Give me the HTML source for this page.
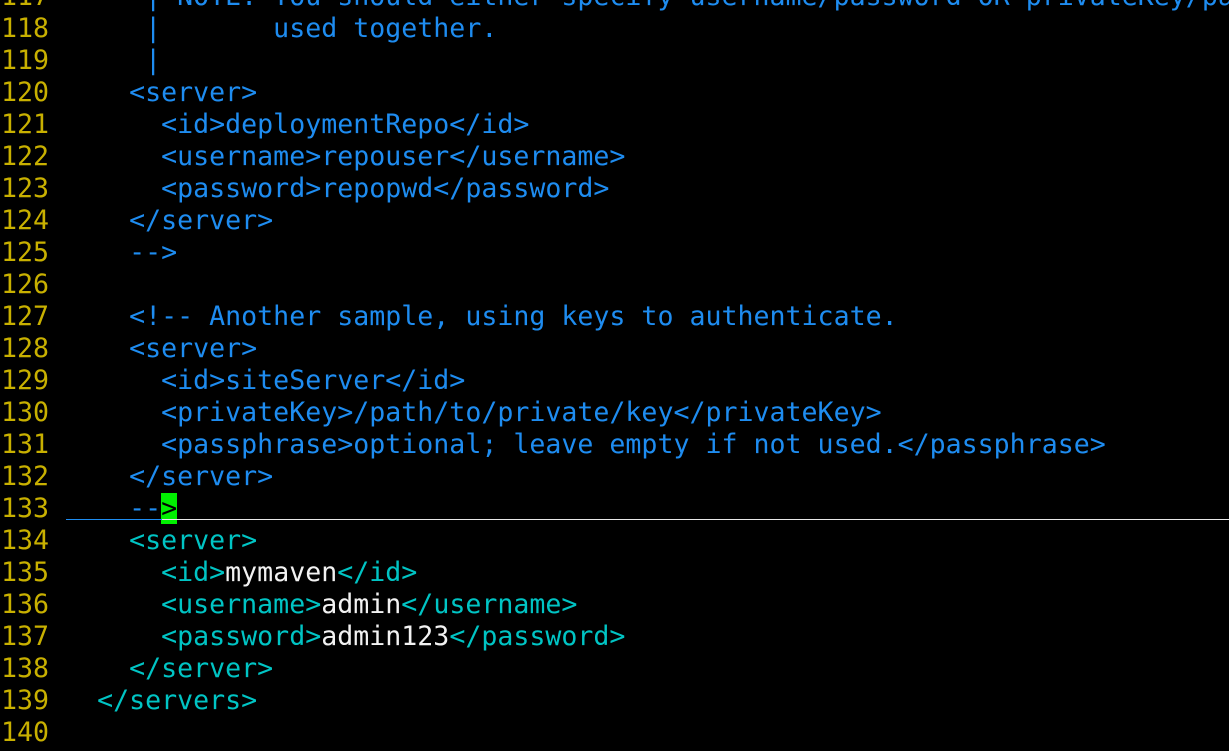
<!DOCTYPE html>
<html><head><meta charset="utf-8"><style>
html,body{margin:0;padding:0;background:#000;width:1229px;height:751px;overflow:hidden;position:relative}
.l{position:absolute;left:1px;width:1228px;overflow:hidden;height:32px;line-height:32px;white-space:pre;font-family:"DejaVu Sans Mono","Liberation Mono",monospace;font-size:26.6px;color:#1e8cf0;margin-top:1px}
.n{color:#c8b000}
.b{color:#1e8cf0}
.c{color:#00c4c4}
.w{color:#f2f2f2}
.cur{background:#00f000;color:#000}
#ul1{position:absolute;left:66px;top:519px;width:96px;height:1px;background:#1e8cf0}
#ul2{position:absolute;left:162px;top:519px;width:1067px;height:1px;background:#e8e8e8}
</style></head><body>
<div class="l" style="top:-20px"><span class="n">117 </span><span class="b">     | NOTE: You should either specify username/password OR privateKey/passphrase, since these pairs are</span></div>
<div class="l" style="top:12px"><span class="n">118 </span><span class="b">     |       used together.</span></div>
<div class="l" style="top:44px"><span class="n">119 </span><span class="b">     |</span></div>
<div class="l" style="top:76px"><span class="n">120 </span><span class="b">    &lt;server&gt;</span></div>
<div class="l" style="top:108px"><span class="n">121 </span><span class="b">      &lt;id&gt;deploymentRepo&lt;/id&gt;</span></div>
<div class="l" style="top:140px"><span class="n">122 </span><span class="b">      &lt;username&gt;repouser&lt;/username&gt;</span></div>
<div class="l" style="top:172px"><span class="n">123 </span><span class="b">      &lt;password&gt;repopwd&lt;/password&gt;</span></div>
<div class="l" style="top:204px"><span class="n">124 </span><span class="b">    &lt;/server&gt;</span></div>
<div class="l" style="top:236px"><span class="n">125 </span><span class="b">    --&gt;</span></div>
<div class="l" style="top:268px"><span class="n">126 </span></div>
<div class="l" style="top:300px"><span class="n">127 </span><span class="b">    &lt;!-- Another sample, using keys to authenticate.</span></div>
<div class="l" style="top:332px"><span class="n">128 </span><span class="b">    &lt;server&gt;</span></div>
<div class="l" style="top:364px"><span class="n">129 </span><span class="b">      &lt;id&gt;siteServer&lt;/id&gt;</span></div>
<div class="l" style="top:396px"><span class="n">130 </span><span class="b">      &lt;privateKey&gt;/path/to/private/key&lt;/privateKey&gt;</span></div>
<div class="l" style="top:428px"><span class="n">131 </span><span class="b">      &lt;passphrase&gt;optional; leave empty if not used.&lt;/passphrase&gt;</span></div>
<div class="l" style="top:460px"><span class="n">132 </span><span class="b">    &lt;/server&gt;</span></div>
<div class="l" style="top:492px"><span class="n">133 </span><span class="b">    --</span><span class="cur">&gt;</span></div>
<div id="ul1"></div><div id="ul2"></div>
<div class="l" style="top:524px"><span class="n">134 </span><span class="c">    &lt;server&gt;</span></div>
<div class="l" style="top:556px"><span class="n">135 </span><span class="c">      &lt;id&gt;</span><span class="w">mymaven</span><span class="c">&lt;/id&gt;</span></div>
<div class="l" style="top:588px"><span class="n">136 </span><span class="c">      &lt;username&gt;</span><span class="w">admin</span><span class="c">&lt;/username&gt;</span></div>
<div class="l" style="top:620px"><span class="n">137 </span><span class="c">      &lt;password&gt;</span><span class="w">admin123</span><span class="c">&lt;/password&gt;</span></div>
<div class="l" style="top:652px"><span class="n">138 </span><span class="c">    &lt;/server&gt;</span></div>
<div class="l" style="top:684px"><span class="n">139 </span><span class="c">  &lt;/servers&gt;</span></div>
<div class="l" style="top:716px"><span class="n">140 </span></div>
</body></html>
